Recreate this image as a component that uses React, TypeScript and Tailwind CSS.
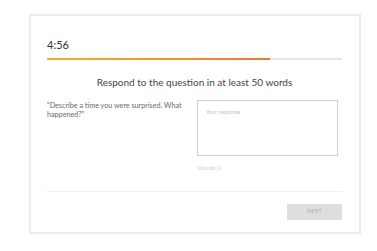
export default function App() {
  const progress = 75.5;
  return (
    <div className="w-[377px] h-[251px] bg-white pt-[14px] pl-[29px]" style={{ fontFamily: "Lato, 'Open Sans', sans-serif" }}>
      <div className="w-[332px] h-[220px] border-2 border-[#ececec] bg-white pl-4 pr-[17px] pt-[22px]">
        {/* Timer */}
        <div className="text-[11px] leading-[14px] text-[#333]">4:56</div>
        <div className="mt-[6px] h-[2px] w-full bg-[#e6e6e6]">
          <div
            className="h-full bg-gradient-to-r from-[#f5ad35] to-[#ec7a2c]"
            style={{ width: `${progress}%` }}
          />
        </div>

        {/* Prompt */}
        <div className="mt-[16px] text-center text-[10px] leading-[13px] text-[#444]">
          Respond to the question in at least 50 words
        </div>

        <div className="mt-[11px] flex justify-between">
          <div className="w-[145px] text-[7.2px] leading-[9px] text-[#6a6a6a] pt-[1px]">
            "Describe a time you were surprised. What happened?"
          </div>
          <div className="w-[141px] mr-[4px]">
            <div className="h-[56px] border border-[#cfcfcf] px-[8px] pt-[7px] text-[5.5px] text-[#c4c4c4]">
              Your response
            </div>
            <div className="mt-[8px] text-[6px] leading-[8px] text-[#cfcfcf]">Words: 0</div>
          </div>
        </div>

        <div className="mt-[19px] h-px w-full bg-[#efefef]" />

        <div className="mt-[12px] flex justify-end">
          <button className="w-[55px] h-[16px] rounded-[1px] bg-[#dedede] text-[5px] tracking-[0.5px] text-[#a8a8a8]">
            NEXT
          </button>
        </div>
      </div>
    </div>
  );
}
